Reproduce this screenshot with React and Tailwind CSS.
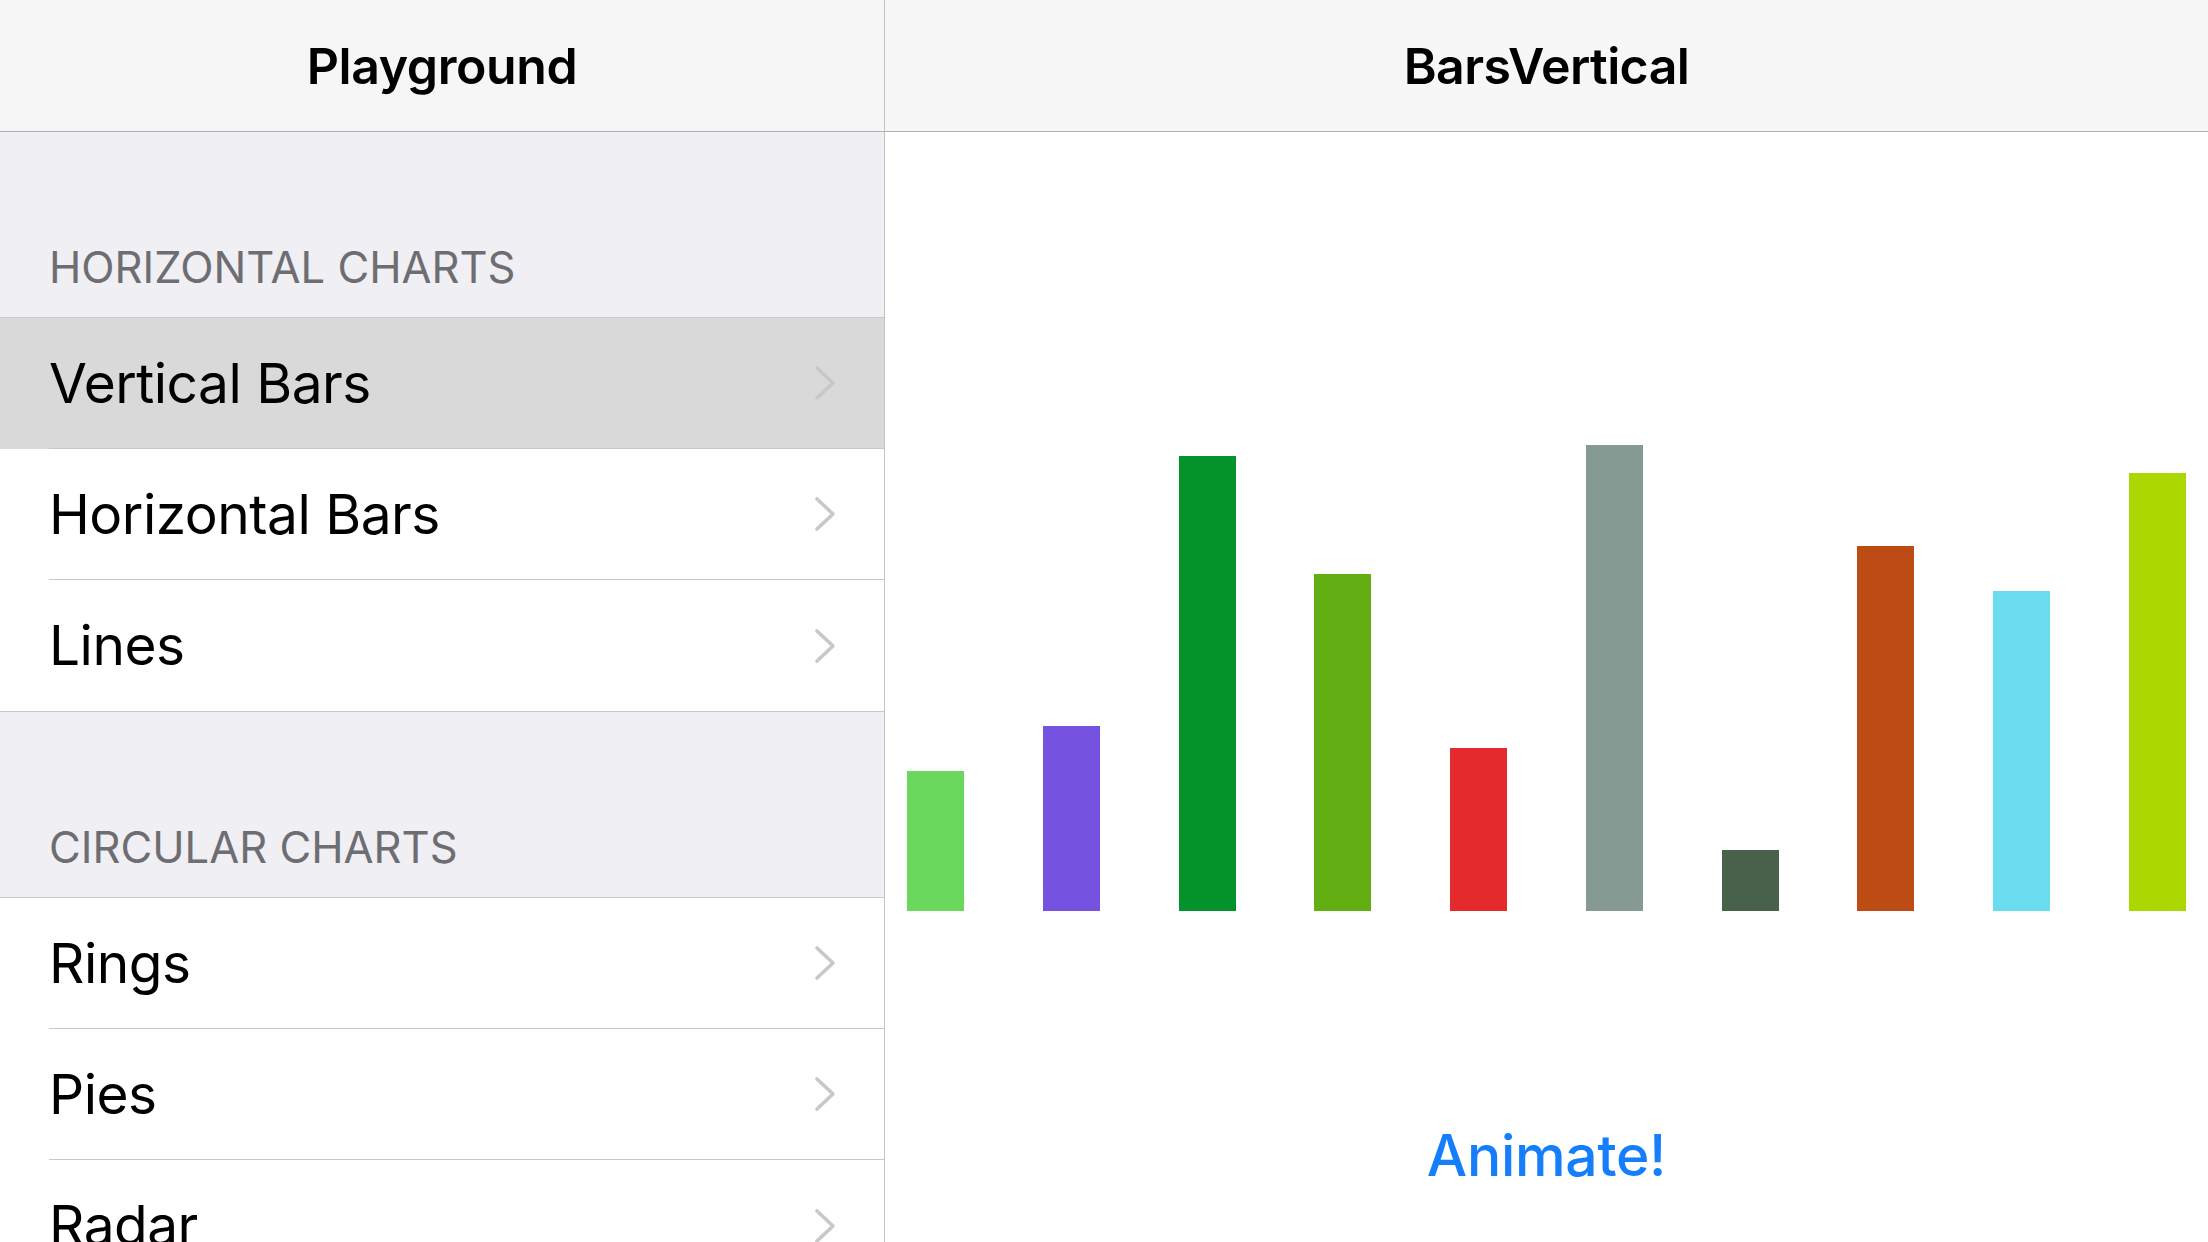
import { useState } from "react";

const sections = [
  { title: "HORIZONTAL CHARTS", height: "h-[185px]", rows: ["Vertical Bars", "Horizontal Bars", "Lines"] },
  { title: "CIRCULAR CHARTS", height: "h-[185px]", rows: ["Rings", "Pies", "Radar"] },
];

const bars = [
  { color: "#69d85c", h: 140 },
  { color: "#7552e0", h: 185 },
  { color: "#03932a", h: 455 },
  { color: "#63ae12", h: 337 },
  { color: "#e52a2d", h: 163 },
  { color: "#869a94", h: 466 },
  { color: "#47614b", h: 61 },
  { color: "#bc4c14", h: 365 },
  { color: "#69dcef", h: 320 },
  { color: "#aad800", h: 438 },
];

function Chevron() {
  return (
    <svg width="24" height="36" viewBox="0 0 24 36" className="shrink-0">
      <polyline points="4,3 20,18 4,33" fill="none" stroke="#c7c7cc" strokeWidth="3.6" strokeLinecap="round" strokeLinejoin="round" />
    </svg>
  );
}

export default function App() {
  const [selected, setSelected] = useState("Vertical Bars");

  return (
    <div className="flex h-[1242px] w-[2208px] overflow-hidden bg-white font-['Inter',sans-serif] text-black">
      <aside className="flex w-[885px] shrink-0 flex-col border-r border-[#c2c1c6] bg-[#efeff4]">
        <div className="flex h-[132px] shrink-0 items-center justify-center border-b border-[#b0b0b3] bg-[#f6f6f7]">
          <h1 className="text-[50px] font-semibold leading-none tracking-[-0.4px]">Playground</h1>
        </div>

        {sections.map((section) => (
          <div key={section.title}>
            <div className={`flex ${section.height} items-end pb-[28px] pl-[49px]`}>
              <span className="text-[43.5px] leading-none text-[#6d6d72]">{section.title}</span>
            </div>
            <div className="border-t border-[#c8c7cc] bg-white">
              {section.rows.map((row, i) => (
                <button
                  key={row}
                  onClick={() => setSelected(row)}
                  className={`flex h-[131px] w-full items-stretch pl-[49px] text-left ${selected === row ? "bg-[#d9d9d9]" : "bg-white"}`}
                >
                  <div className={`flex flex-1 items-center justify-between pr-[47px] ${i < section.rows.length - 1 ? "border-b border-[#c8c7cc]" : ""}`}>
                    <span className="text-[55px] leading-none tracking-[-0.5px]">{row}</span>
                    <Chevron />
                  </div>
                </button>
              ))}
            </div>
            <div className="border-t border-[#c8c7cc]" />
          </div>
        ))}
      </aside>

      <main className="flex flex-1 flex-col">
        <div className="flex h-[132px] shrink-0 items-center justify-center border-b border-[#b0b0b3] bg-[#f7f7f7]">
          <h1 className="text-[50px] font-semibold leading-none tracking-[-0.6px]">BarsVertical</h1>
        </div>
        <div className="flex h-[779px] items-end justify-between px-[22px]">
          {bars.map((bar, i) => (
            <div key={i} className="w-[57px]" style={{ height: bar.h, background: bar.color }} />
          ))}
        </div>
        <div className="flex justify-center pt-[216px]">
          <button className="text-[57px] font-medium leading-none tracking-[-0.3px] text-[#157efb]">Animate!</button>
        </div>
      </main>
    </div>
  );
}
